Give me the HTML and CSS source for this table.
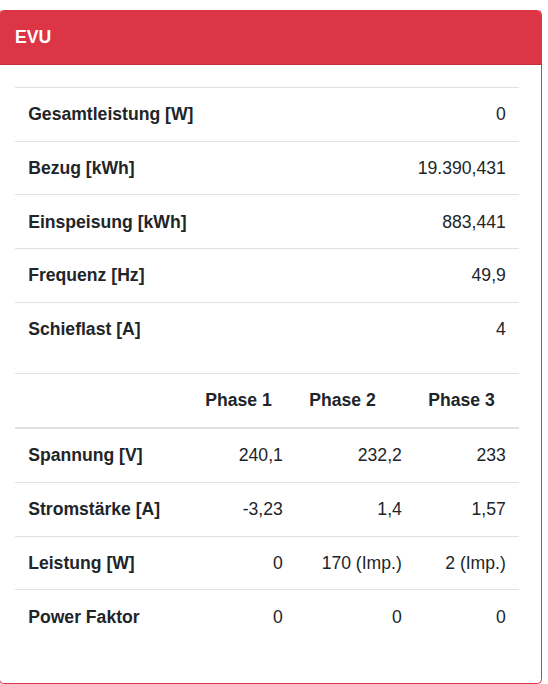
FILE: index.html
```html
<!DOCTYPE html>
<html lang="de">
<head>
<meta charset="utf-8">
<title>EVU</title>
<link rel="stylesheet" href="styles.css">
</head>
<body>
<div class="card">
  <div class="card-header">EVU</div>
  <div class="card-body">
    <table class="tbl tbl-summary">
      <tbody>
        <tr><th>Gesamtleistung [W]</th><td>0</td></tr>
        <tr><th>Bezug [kWh]</th><td>19.390,431</td></tr>
        <tr><th>Einspeisung [kWh]</th><td>883,441</td></tr>
        <tr><th>Frequenz [Hz]</th><td>49,9</td></tr>
        <tr><th>Schieflast [A]</th><td>4</td></tr>
      </tbody>
    </table>
    <table class="tbl tbl-phases">
      <colgroup>
        <col class="c-label"><col class="c-p1"><col class="c-p2"><col class="c-p3">
      </colgroup>
      <thead>
        <tr><th></th><th>Phase 1</th><th>Phase 2</th><th>Phase 3</th></tr>
      </thead>
      <tbody>
        <tr><th>Spannung [V]</th><td>240,1</td><td>232,2</td><td>233</td></tr>
        <tr><th>Stromstärke [A]</th><td>-3,23</td><td>1,4</td><td>1,57</td></tr>
        <tr><th>Leistung [W]</th><td>0</td><td>170 (Imp.)</td><td>2 (Imp.)</td></tr>
        <tr><th>Power Faktor</th><td>0</td><td>0</td><td>0</td></tr>
      </tbody>
    </table>
  </div>
</div>
</body>
</html>
```

FILE: styles.css
```css
html, body {
  margin: 0;
  padding: 0;
  background: #fff;
}
body {
  font-family: "Liberation Sans", Arial, sans-serif;
  font-size: 17.6px;
  line-height: 26.4px;
  color: #212529;
  padding-top: 10px;
}
.card {
  box-sizing: border-box;
  width: 543px;
  margin-left: -1px;
  border: 1px solid #dc3545;
  border-radius: 4.4px;
  overflow: hidden;
  background: #fff;
}
.card-header {
  background: #dc3545;
  color: #fff;
  font-weight: bold;
  padding: 13.2px 15px 13.2px 15px;
  border-bottom: 1px solid rgba(0, 0, 0, 0.125);
}
.card-body {
  padding: 22px 22px 22px 15px;
}
.tbl {
  width: 100%;
  border-collapse: collapse;
  margin-bottom: 17.6px;
}
.tbl th,
.tbl td {
  padding: 13.2px;
  border-top: 1px solid #dee2e6;
  vertical-align: top;
}
.tbl th {
  font-weight: bold;
  text-align: left;
}
.tbl td {
  text-align: right;
}
.tbl-phases {
  table-layout: fixed;
}
.tbl-phases thead th {
  border-bottom: 2px solid #dee2e6;
}
.c-label { width: 177px; }
.c-p1 { width: 104px; }
.c-p2 { width: 119px; }
.c-p3 { width: 104px; }
```
